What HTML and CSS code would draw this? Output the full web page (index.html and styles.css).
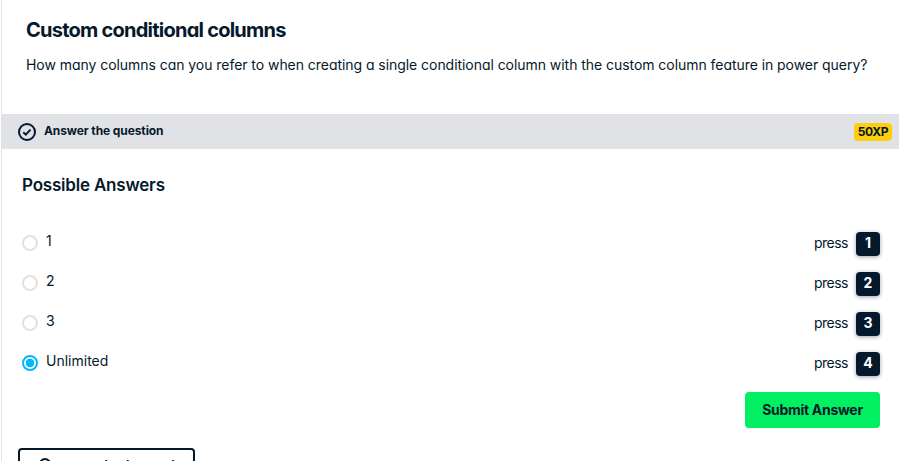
FILE: index.html
```html
<!DOCTYPE html>
<html lang="en">
<head>
<meta charset="utf-8">
<title>Custom conditional columns</title>
<link rel="stylesheet" href="styles.css">
</head>
<body>
<main class="exercise">
  <header class="intro">
    <h1>Custom conditional columns</h1>
    <p>How many columns can you refer to when creating a single conditional column with the custom column feature in power query?</p>
  </header>
  <div class="task-bar">
    <svg class="check" viewBox="0 0 18 18"><circle cx="9" cy="9" r="8"/><path d="M5.3 9.2l2.5 2.4 4.7-5"/></svg>
    <strong>Answer the question</strong>
    <span class="xp">50XP</span>
  </div>
  <section class="answers">
    <h2>Possible Answers</h2>
    <ul>
      <li><span class="radio"></span><span class="label">1</span><span class="press">press</span><kbd>1</kbd></li>
      <li><span class="radio"></span><span class="label">2</span><span class="press">press</span><kbd>2</kbd></li>
      <li><span class="radio"></span><span class="label">3</span><span class="press">press</span><kbd>3</kbd></li>
      <li><span class="radio selected"></span><span class="label">Unlimited</span><span class="press">press</span><kbd>4</kbd></li>
    </ul>
    <button class="submit">Submit Answer</button>
  </section>
  <button class="hint"><svg viewBox="0 0 16 16"><path d="M5 12v-2a5 5 0 1 1 6 0v2zM6 15h4"/></svg><span>Take Hint (-15 XP)</span></button>
</main>
</body>
</html>
```
FILE: styles.css
```css
* { box-sizing: border-box; }
body { margin: 0; height: 461px; overflow: hidden; background: #fff; color: #05192d; font-family: Inter, "Open Sans", sans-serif; font-feature-settings: "cv11"; font-size: 14px; }
.exercise { height: 461px; overflow: hidden; border-left: 1px solid #e1e2e8; margin-left: 1px; }
.intro { height: 114px; padding: 18px 0 0 24px; white-space: nowrap; }
h1 { margin: 0; font-size: 20px; line-height: 24px; font-weight: 700; letter-spacing: -0.76px; }
.intro p { margin: 13px 0 0; line-height: 20px; letter-spacing: -0.05px; }
.task-bar { display: flex; align-items: center; height: 35px; background: #e1e2e6; padding: 0 7px 0 16px; }
.check { width: 18px; height: 18px; margin-right: 8px; fill: none; stroke: #05192d; stroke-width: 2; }
.task-bar strong { font-size: 12px; line-height: 18px; font-weight: 700; margin-bottom: 2px; letter-spacing: -0.1px; }
.xp { margin-left: auto; width: 38px; height: 18px; border-radius: 4px; background: #fcce0d; font-size: 12px; line-height: 18px; font-weight: 700; text-align: center; letter-spacing: -0.4px; }
.answers { padding: 25px 19px 0 20px; }
h2 { margin: 0; font-size: 17px; line-height: 22px; font-weight: 600; letter-spacing: -0.2px; }
ul { list-style: none; margin: 36px 0 0; padding: 0; display: grid; gap: 16px; }
li { display: flex; align-items: center; height: 24px; }
.radio { width: 16px; height: 16px; border: 2px solid #e5e1da; border-radius: 50%; margin: 0 8px 2px 0; }
.selected { border-color: #03b8ff; background: radial-gradient(circle, #03b8ff 0 4px, #fff 4.6px); }
.label { margin-bottom: 7px; }
.press { margin: 0 8px 3px auto; letter-spacing: -0.5px; }
kbd { width: 24px; height: 24px; border-radius: 4px; background: #05192d; color: #fff; font: 700 14px/21px Inter, sans-serif; text-align: center; box-shadow: 0 1px 4px #05192d66; }
button { font-family: inherit; font-feature-settings: inherit; color: inherit; }
.submit { display: block; width: 135px; height: 36px; margin: 16px 0 0 auto; padding: 0 0 1px; border: 0; border-radius: 4px; background: #03ef62; font-size: 14px; font-weight: 700; letter-spacing: -0.3px; }
.hint { display: flex; align-items: center; justify-content: center; gap: 7px; width: 177px; height: 36px; margin: 20px 0 0 16px; padding: 0; border: 2px solid #05192d; border-radius: 4px; background: #fff; font-size: 13.333px; font-weight: 700; }
.hint svg { width: 16px; height: 16px; fill: none; stroke: #05192d; stroke-width: 2; }
```
